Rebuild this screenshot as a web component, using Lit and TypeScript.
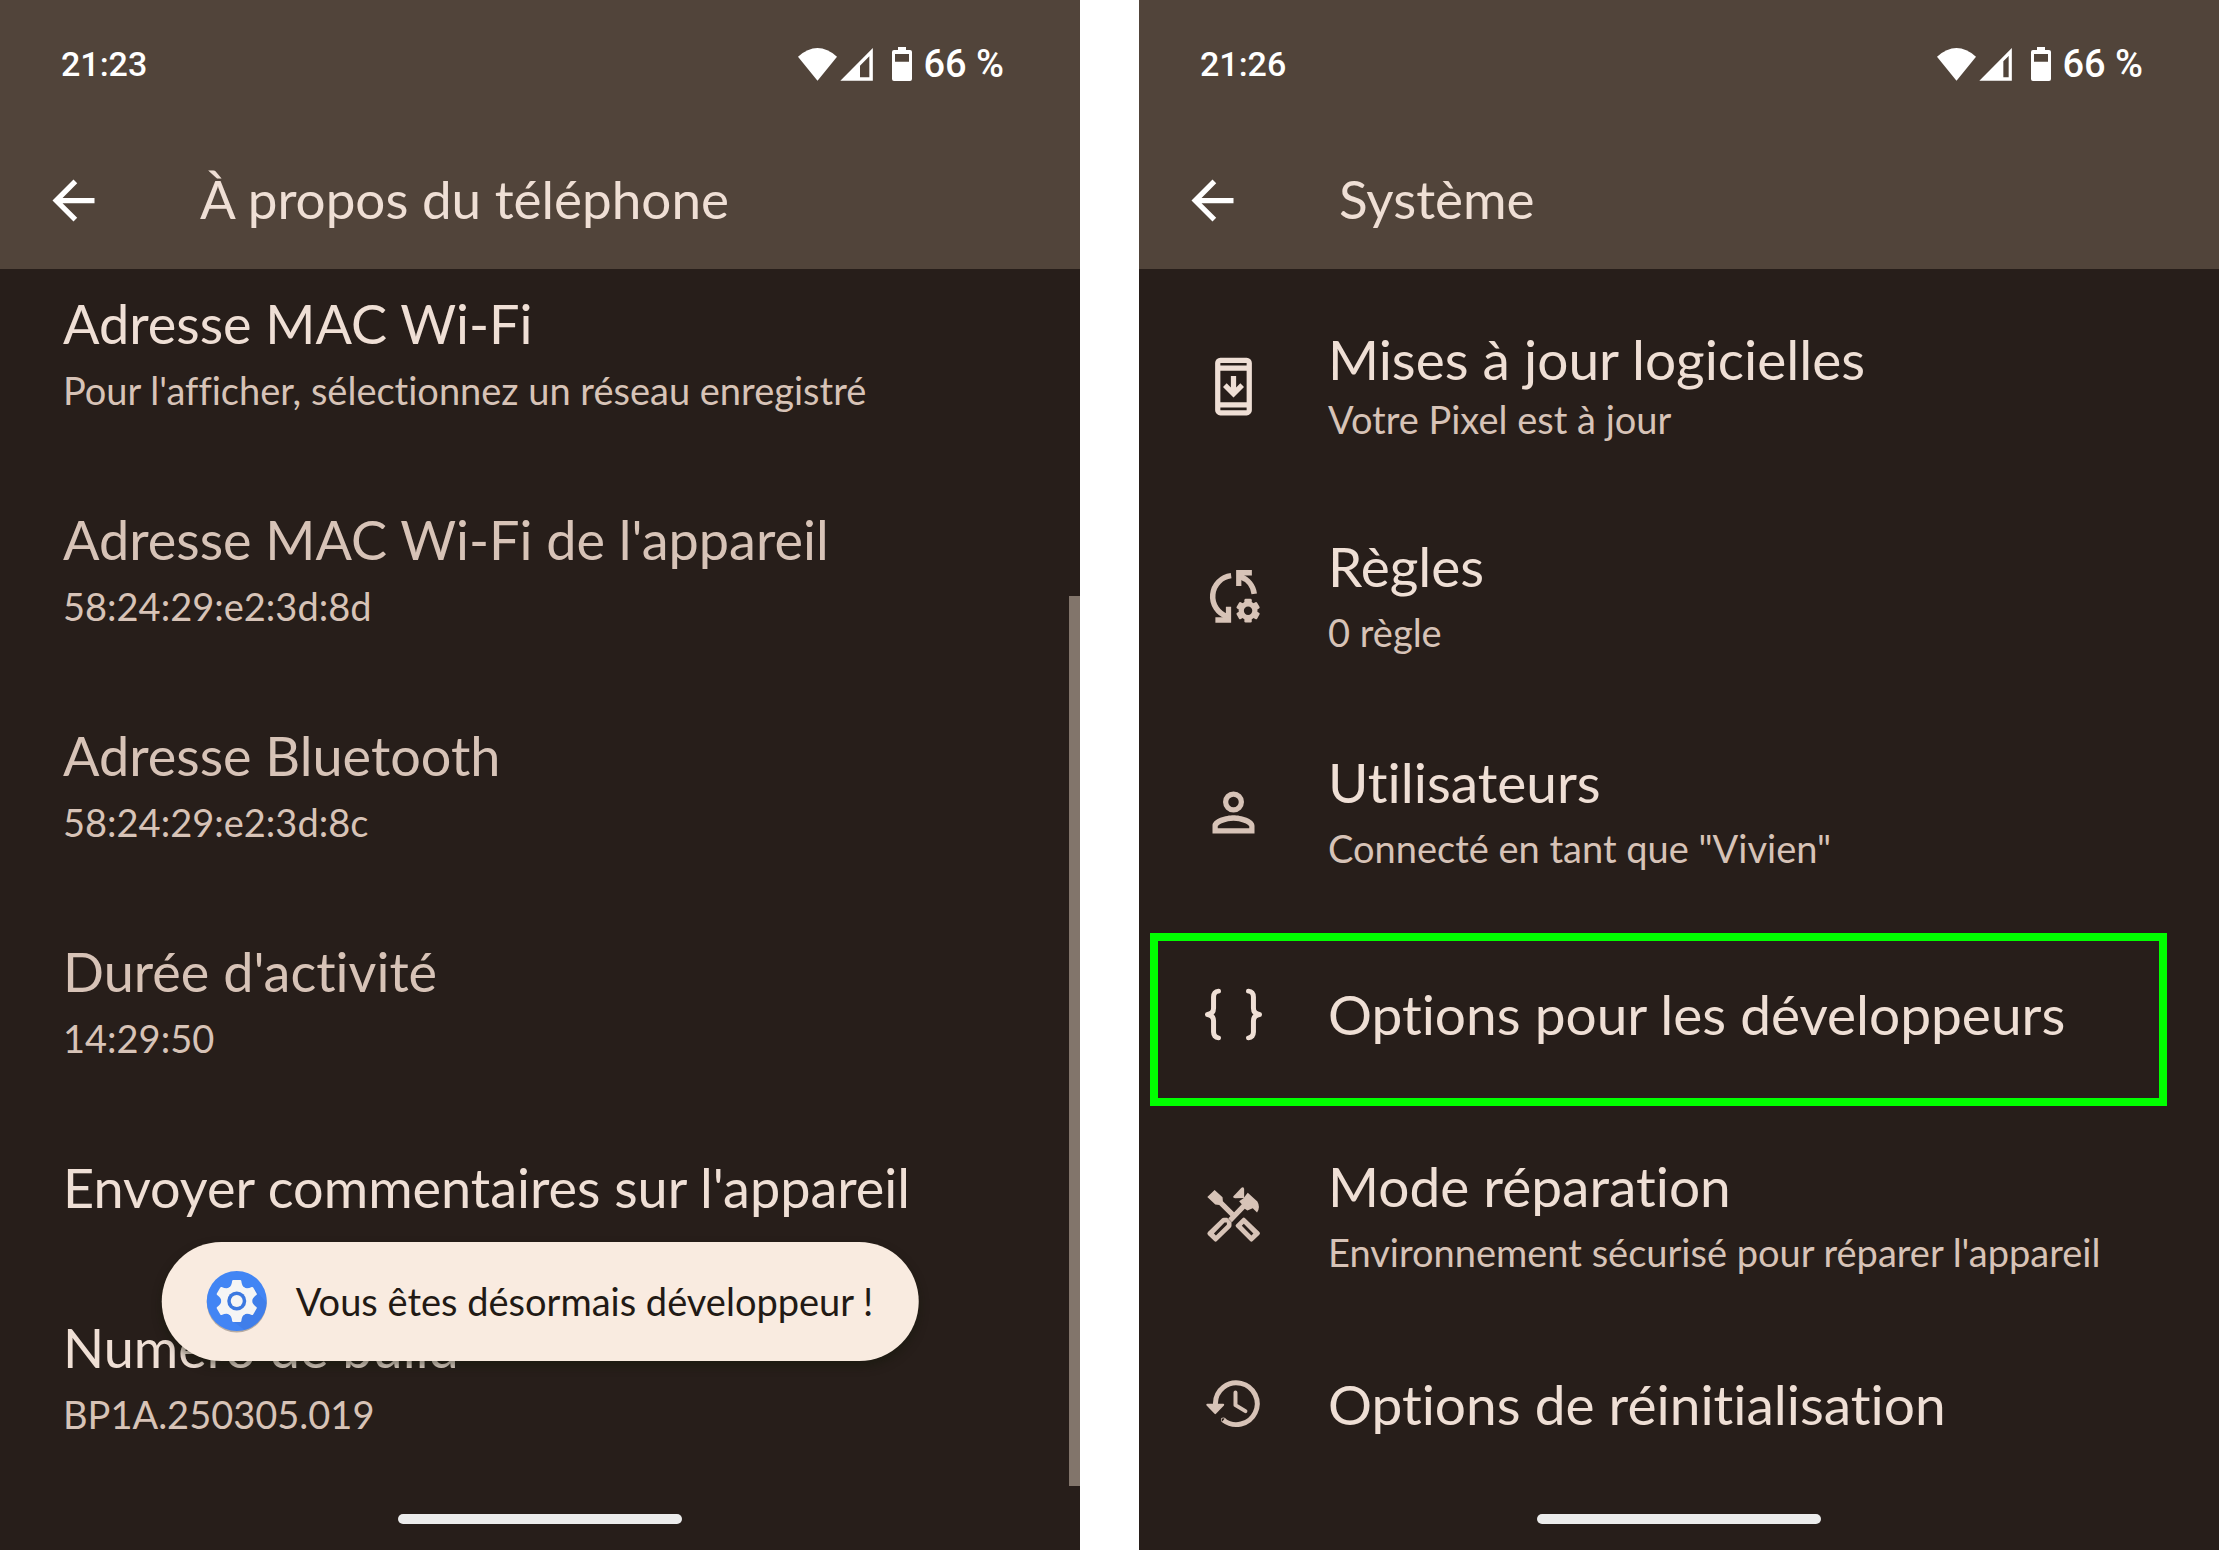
import { LitElement, html, svg, css, nothing, TemplateResult } from "lit";
import { customElement, property } from "lit/decorators.js";

interface Row {
  title: string;
  detail?: string;
  icon?: string;
  muted?: boolean;
  kind?: "first" | "marked";
}

const angles = [0, 60, 120, 180, 240, 300];

const icons: Record<string, TemplateResult> = {
  update: html`<svg class="icon bright" viewBox="0 0 24 24" aria-hidden="true">
    <path fill-rule="evenodd" d="M7 1h10a2 2 0 0 1 2 2v18a2 2 0 0 1-2 2H7a2 2 0 0 1-2-2V3a2 2 0 0 1 2-2zM7 3v1h10V3zM7 6v12h10V6zM7 20v1h10v-1z"/>
    <path d="M16 12.2l-1.4-1.4-1.6 1.6V8h-2v4.4l-1.6-1.6L8 12.2l4 4z"/>
  </svg>`,
  rules: html`<svg class="icon" viewBox="0 0 24 24" aria-hidden="true">
    <path d="M11.1 4.05A8 8 0 0 0 9.6 19.6M14.6 4.4A8 8 0 0 1 19.9 11" fill="none" stroke="currentColor" stroke-width="2.1"/>
    <path d="M9.1 15.9h2V22h-6v-2.1h4zM13 1.9h6V4h-4v4h-2z"/>
    <g transform="translate(17.55 17.4)">
      <circle r="2.6" fill="none" stroke="currentColor" stroke-width="2"/>
      ${angles.map((a) => svg`<rect x="-1.4" y="-4.5" width="2.8" height="2.6" rx=".5" transform="rotate(${a})"/>`)}
    </g>
  </svg>`,
  user: html`<svg class="icon" viewBox="0 0 24 24" aria-hidden="true">
    <circle cx="12" cy="8" r="3" fill="none" stroke="currentColor" stroke-width="2"/>
    <path fill-rule="evenodd" d="M12 13c-2.7 0-8 1.3-8 4v3h16v-3c0-2.7-5.3-4-8-4zM6 18v-.8c.3-.8 3.3-2.1 6-2.1s5.7 1.3 6 2.1v.8z"/>
  </svg>`,
  braces: html`<svg class="icon bright" viewBox="0 0 24 24" aria-hidden="true">
    <g fill="none" stroke="currentColor" stroke-width="1.9" stroke-linecap="round" stroke-linejoin="round">
      <path d="M6.3 3.1C5.1 3.2 4.4 4.1 4.4 5.3V9.6C4.4 11.1 3.4 11.8 2.1 12 3.4 12.2 4.4 12.9 4.4 14.4V18.7C4.4 19.9 5.1 20.8 6.3 20.9"/>
      <path d="M17.7 3.1C18.9 3.2 19.6 4.1 19.6 5.3V9.6C19.6 11.1 20.6 11.8 21.9 12 20.6 12.2 19.6 12.9 19.6 14.4V18.7C19.6 19.9 18.9 20.8 17.7 20.9"/>
    </g>
  </svg>`,
  tools: html`<svg class="icon" viewBox="65 50 190 190" aria-hidden="true">
    <path d="M81 86L103 65 127 87 128 99 163 134 152 145 117 110 105 109z"/>
    <path d="M159 85L184 58Q190 55 192 61V89L165 90Q158 90 159 85z"/>
    <path d="M177 99L190 90 203 73 232 100Q242 117 231 133L218 120 202 127 194 122 155 162 144 151 185 108z"/>
    <path fill-rule="evenodd" d="M83 192L125 151Q127 149 131 149H141L154 162V172Q154 176 151 179L110 219Q106 223 102 219L83 201Q79 196 83 192zM101 196L107 202 140 170V163H133z"/>
    <path fill-rule="evenodd" d="M168 169L187 150Q191 146 195 150L238 192Q242 196 238 200L218 219Q214 223 210 219L168 177Q164 173 168 169zM185 173L214 202 220 196 191 167z"/>
  </svg>`,
  history: html`<svg class="icon" viewBox="65 614 190 190" aria-hidden="true">
    <g fill="none" stroke="currentColor" stroke-linecap="round" stroke-linejoin="round">
      <path d="M105.5 713V709A63 63 0 1 1 129.5 759" stroke-width="15" stroke-linecap="butt"/>
      <circle cx="129.5" cy="759" r="1" stroke-width="13"/>
      <path d="M166 676V714L196 732" stroke-width="12"/>
      <path d="M81 713H129L105 738z" fill="currentColor" stroke-width="6"/>
    </g>
  </svg>`,
};

@customElement("phone-screen")
class PhoneScreen extends LitElement {
  @property() time = "";
  @property() heading = "";
  @property({ attribute: false }) rows: Row[] = [];
  @property({ type: Boolean }) weak = false;
  @property({ type: Boolean }) scrolled = false;
  @property() toast = "";

  static styles = css`
    :host {
      display: flex;
      flex-direction: column;
      position: relative;
      min-height: 100vh;
      overflow: hidden;
      background: #271e1a;
      color: #efdfd5;
      font-family: Lato, sans-serif;
      font-variant-ligatures: none;
    }
    header { background: #51443a; }
    .status {
      display: flex;
      align-items: center;
      justify-content: space-between;
      height: 128px;
      padding: 0 76px 0 61px;
      color: #fff;
      font: 500 38px/48px Roboto, sans-serif;
    }
    .clock { font-size: 34px; }
    .signals { display: flex; align-items: center; gap: 11px; }
    .signals svg { width: 114px; height: 34px; fill: #fff; }
    .toolbar {
      display: flex;
      align-items: center;
      gap: 95px;
      height: 137px;
      padding: 4px 42px 0;
    }
    h1 { margin: 0; padding-bottom: 4px; font-size: 53px; font-weight: 400; line-height: 60px; white-space: nowrap; }
    button {
      border: 0;
      margin: 0;
      padding: 0;
      background: none;
      color: inherit;
      font: inherit;
      text-align: left;
      cursor: pointer;
    }
    .back { width: 63px; height: 63px; flex: none; }
    .back svg { display: block; width: 63px; height: 63px; fill: #fff; }
    main { flex: 1; position: relative; overflow: hidden; }
    ul { list-style: none; margin: 0; padding: 13px 0 0; }
    .scrolled ul { margin-top: -23px; padding: 0; }
    li { position: relative; }
    .row {
      display: flex;
      align-items: center;
      gap: 63px;
      box-sizing: border-box;
      width: 100%;
      min-height: 156px;
      padding: 48px 63px;
    }
    .scrolled .row { min-height: 160px; align-items: flex-start; }
    .first { padding: 47px 63px 45px; }
    .first .text { gap: 6px; }
    .marked { min-height: 188px; }
    .text { display: flex; flex-direction: column; gap: 12px; white-space: nowrap; }
    .title { font-size: 55px; line-height: 60px; }
    .scrolled .title { font-size: 54px; }
    .detail { font-size: 38px; line-height: 48px; color: #d7c3b7; }
    .muted .title { color: #d7c3b7; }
    .icon { flex: none; width: 63px; height: 63px; fill: currentColor; color: #d7c3b7; }
    .bright { color: #efdfd5; }
    .frame {
      position: absolute;
      inset: 13px 52px 2px 11px;
      border: 8px solid #0f0;
      pointer-events: none;
    }
    .scrollbar {
      position: absolute;
      top: 327px;
      right: 0;
      bottom: 2px;
      width: 11px;
      background: #82756b;
    }
    .home { display: flex; justify-content: center; padding: 26px 0; }
    .home span { width: 284px; height: 10px; border-radius: 5px; background: #ececec; }
    .toast {
      position: absolute;
      left: 50%;
      bottom: 189px;
      transform: translateX(-50%);
      display: flex;
      align-items: center;
      gap: 29px;
      box-sizing: border-box;
      height: 119px;
      padding: 0 45px 2px;
      border-radius: 60px;
      background: #f9ebe0;
      color: #221a15;
      font-size: 38px;
      line-height: 48px;
      white-space: nowrap;
      box-shadow: 0 5px 10px rgba(20, 24, 10, 0.5);
    }
    .toast svg { width: 60px; height: 60px; overflow: visible; }
  `;

  private renderRow(row: Row) {
    const cls = `row ${row.kind ?? ""} ${row.muted ? "muted" : ""}`;
    const body = html`${row.icon ? icons[row.icon] : nothing}
      <span class="text">
        <span class="title">${row.title}</span>
        ${row.detail ? html`<span class="detail">${row.detail}</span>` : nothing}
      </span>`;
    return html`<li>
      ${row.muted ? html`<div class=${cls}>${body}</div>` : html`<button class=${cls}>${body}</button>`}
      ${row.kind === "marked" ? html`<span class="frame"></span>` : nothing}
    </li>`;
  }

  render() {
    const notch = this.weak ? "M300 104L328 76V139H300z" : "M313 91L329 75V139H313z";
    return html`
      <header>
        <div class="status">
          <span class="clock">${this.time}</span>
          <div class="signals">
            <svg viewBox="114 48 342 102" aria-hidden="true">
              <path d="M114 77Q172.5 25 231 77L172.5 149z"/>
              <path fill-rule="evenodd" d="M241 149.5L338.5 51V149.5z${notch}"/>
              <path fill-rule="evenodd" d="M414 48H438V57H450Q456 57 456 63V144Q456 150 450 150H402Q396 150 396 144V63Q396 57 402 57H414zM405 69V92H447V69z"/>
            </svg>
            <span>66 %</span>
          </div>
        </div>
        <div class="toolbar">
          <button class="back" aria-label="Retour">
            <svg viewBox="0 0 24 24"><path d="M20 11H7.83l5.59-5.59L12 4l-8 8 8 8 1.41-1.41L7.83 13H20v-2z"/></svg>
          </button>
          <h1>${this.heading}</h1>
        </div>
      </header>
      <main class=${this.scrolled ? "scrolled" : ""}>
        <ul>${this.rows.map((r) => this.renderRow(r))}</ul>
        ${this.scrolled ? html`<div class="scrollbar"></div>` : nothing}
      </main>
      <div class="home"><span></span></div>
      ${this.toast
        ? html`<div class="toast" role="status">
            <svg viewBox="-30 -30 60 60" aria-hidden="true">
              <circle cy="1.5" r="30" fill="#8a8078" opacity=".6"/>
              <circle r="30" fill="#4285f4"/>
              <path d="M18 -12L30 2A30 30 0 0 1 8 29L-4 20z" fill="#3b78e0" opacity=".5"/>
              <g fill="#f5f5f5">
                <circle r="15.5"/>
                ${angles.map((a) => svg`<path d="M-8 -13Q-5 -15 -4.6 -20Q-4.5 -21 -3.5 -21H3.5Q4.5 -21 4.6 -20Q5 -15 8 -13z" transform="rotate(${a})"/>`)}
              </g>
              <circle r="9.5" fill="#3b78e0"/>
              <circle r="6" fill="#f5f5f5"/>
            </svg>
            <span>${this.toast}</span>
          </div>`
        : nothing}
    `;
  }
}

const about: Row[] = [
  { title: "Adresse MAC Wi-Fi", detail: "Pour l'afficher, sélectionnez un réseau enregistré" },
  { title: "Adresse MAC Wi-Fi de l'appareil", detail: "58:24:29:e2:3d:8d", muted: true },
  { title: "Adresse Bluetooth", detail: "58:24:29:e2:3d:8c", muted: true },
  { title: "Durée d'activité", detail: "14:29:50", muted: true },
  { title: "Envoyer commentaires sur l'appareil" },
  { title: "Numéro de build", detail: "BP1A.250305.019" },
];

const system: Row[] = [
  { title: "Mises à jour logicielles", detail: "Votre Pixel est à jour", icon: "update", kind: "first" },
  { title: "Règles", detail: "0 règle", icon: "rules" },
  { title: "Utilisateurs", detail: "Connecté en tant que \"Vivien\"", icon: "user" },
  { title: "Options pour les développeurs", icon: "braces", kind: "marked" },
  { title: "Mode réparation", detail: "Environnement sécurisé pour réparer l'appareil", icon: "tools" },
  { title: "Options de réinitialisation", icon: "history" },
];

@customElement("app-root")
class AppRoot extends LitElement {
  static styles = css`
    :host {
      display: grid;
      grid-template-columns: minmax(0, 1fr) minmax(0, 1fr);
      gap: 59px;
      background: #fff;
    }
  `;

  render() {
    return html`
      <phone-screen time="21:23" heading="À propos du téléphone" .rows=${about} weak scrolled
        toast="Vous êtes désormais développeur !"></phone-screen>
      <phone-screen time="21:26" heading="Système" .rows=${system}></phone-screen>
    `;
  }
}
